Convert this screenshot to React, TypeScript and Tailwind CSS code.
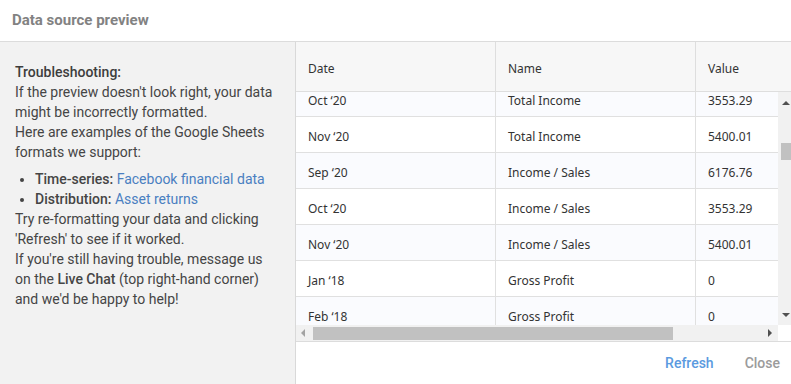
import React from "react";

const rows = [
  { date: "Oct ‘20", name: "Total Income", value: "3553.29" },
  { date: "Nov ‘20", name: "Total Income", value: "5400.01" },
  { date: "Sep ‘20", name: "Income / Sales", value: "6176.76" },
  { date: "Oct ‘20", name: "Income / Sales", value: "3553.29" },
  { date: "Nov ‘20", name: "Income / Sales", value: "5400.01" },
  { date: "Jan ‘18", name: "Gross Profit", value: "0" },
  { date: "Feb ‘18", name: "Gross Profit", value: "0" },
];

const Arrow = ({ dir }: { dir: "up" | "down" | "left" | "right" }) => {
  const pts = {
    up: "0,4 4,0 8,4",
    down: "0,0 8,0 4,4",
    left: "4,0 4,8 0,4",
    right: "0,0 0,8 4,4",
  }[dir];
  const vertical = dir === "up" || dir === "down";
  return (
    <svg width={vertical ? 8 : 4} height={vertical ? 4 : 8} viewBox={vertical ? "0 0 8 4" : "0 0 4 8"}>
      <polygon points={pts} fill={dir === "left" ? "#a3a3a3" : "#505050"} />
    </svg>
  );
};

const App = () => {
  return (
    <div className="w-[791px] h-[384px] flex flex-col bg-white overflow-hidden font-['Roboto',sans-serif]">
      {/* header */}
      <div className="h-[42px] shrink-0 border-b border-[#dcdcdc] px-3 flex items-center text-[15px] font-bold text-[#828282]">
        Data source preview
      </div>

      <div className="flex flex-1 min-h-0">
        {/* troubleshooting panel */}
        <div className="w-[296px] shrink-0 bg-[#f2f2f2] border-r border-[#d9d9d9] pt-5 pl-[15px] pr-[17px] text-[14px] leading-5 text-[#454545]">
          <p className="font-medium text-[#3d3d3d]">Troubleshooting:</p>
          <p>If the preview doesn't look right, your data might be incorrectly formatted.</p>
          <p>Here are examples of the Google Sheets formats we support:</p>
          <ul className="list-disc pl-5 mt-[7px]">
            <li>
              <span className="font-medium">Time-series:</span>{" "}
              <span className="text-[#4a7fc1]">Facebook financial data</span>
            </li>
            <li>
              <span className="font-medium">Distribution:</span>{" "}
              <span className="text-[#4a7fc1]">Asset returns</span>
            </li>
          </ul>
          <p>Try re-formatting your data and clicking 'Refresh' to see if it worked.</p>
          <p>
            If you're still having trouble, message us on the <span className="font-medium">Live Chat</span> (top
            right-hand corner) and we'd be happy to help!
          </p>
        </div>

        {/* preview */}
        <div className="flex-1 min-w-0 flex flex-col">
          <div className="h-[300px] shrink-0 flex flex-col border-b border-[#dcdcdc] font-['Noto_Sans',sans-serif] text-[12px] text-[#333]">
            {/* column headers */}
            <div className="h-[50px] shrink-0 flex bg-[#f7f7f7] border-b border-[#dedede]">
              <div className="w-[200px] shrink-0 border-r border-[#dedede] pl-3 pt-1 flex items-center">Date</div>
              <div className="w-[200px] shrink-0 border-r border-[#dedede] pl-3 pt-1 flex items-center">Name</div>
              <div className="flex-1 pl-3 pt-1 flex items-center">Value</div>
            </div>

            {/* body */}
            <div className="flex flex-1 min-h-0">
              <div className="flex-1 min-w-0 overflow-hidden">
                <div className="-mt-[11px]">
                  {rows.map((r, i) => (
                    <div
                      key={i}
                      className={`h-9 flex border-b border-[#e0e0e0] ${i % 2 === 0 ? "bg-[#fafbfe]" : "bg-white"}`}
                    >
                      <div className="w-[200px] shrink-0 border-r border-[#e0e0e0] pl-3 pt-1 flex items-center">{r.date}</div>
                      <div className="w-[200px] shrink-0 border-r border-[#e0e0e0] pl-3 pt-1 flex items-center">{r.name}</div>
                      <div className="flex-1 pl-3 pt-1 flex items-center">{r.value}</div>
                    </div>
                  ))}
                </div>
              </div>
              <div className="w-[13px] shrink-0 bg-[#f1f1f1] flex flex-col items-center pl-[3px] pt-[9px] pb-[8px]">
                <Arrow dir="up" />
                <div className="h-[17px] w-full bg-[#c1c1c1] mt-[38px]" />
                <div className="flex-1" />
                <Arrow dir="down" />
              </div>
            </div>

            {/* horizontal scrollbar */}
            <div className="h-4 shrink-0 flex">
              <div className="flex-1 bg-[#f1f1f1] flex items-center pl-[5px] pr-[6px]">
                <Arrow dir="left" />
                <div className="h-[13px] w-[360px] bg-[#c1c1c1] ml-[8px]" />
                <div className="flex-1" />
                <Arrow dir="right" />
              </div>
              <div className="w-[13px] bg-white" />
            </div>
          </div>

          {/* footer */}
          <div className="flex-1 flex items-center justify-end gap-[31px] pr-[11px] text-[14px] font-medium">
            <span className="text-[#5a9ae0]">Refresh</span>
            <span className="text-[#9b9b9b]">Close</span>
          </div>
        </div>
      </div>
    </div>
  );
};

export default App;
